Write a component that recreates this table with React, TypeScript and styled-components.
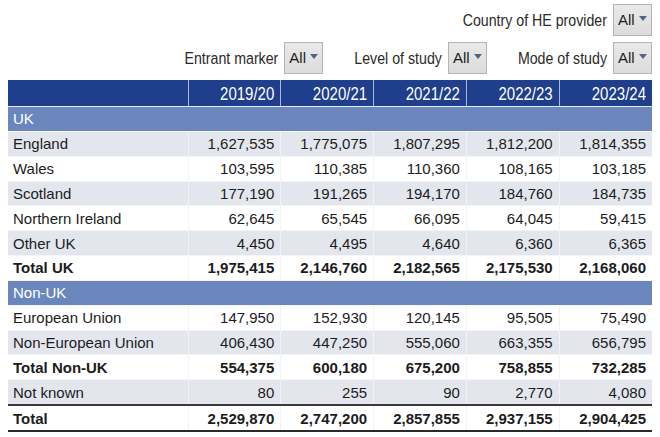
import React from "react";
import styled, { createGlobalStyle } from "styled-components";

const GlobalStyle = createGlobalStyle`
  html, body { margin: 0; padding: 0; background: #ffffff; }
  body { font-family: "Liberation Sans", Arial, sans-serif; color: #1c1c1c; }
`;

const Page = styled.div`
  width: 660px;
  padding: 4px 8px 0 8px;
  box-sizing: border-box;
  display: flex;
  flex-direction: column;
  gap: 6px;
`;

const FilterBar = styled.div`
  display: flex;
  justify-content: flex-end;
  align-items: center;
  gap: 31px;
  height: 32px;
`;

const FilterGroup = styled.div`
  display: flex;
  align-items: center;
  gap: 6px;
`;

const FilterLabel = styled.span`
  display: inline-block;
  font-size: 14.2px;
  color: #2a2a2a;
  transform: scaleY(1.2);
`;

const SelectBox = styled.div`
  position: relative;
  width: 39px;
  height: 32px;
  box-sizing: border-box;
  border: 1px solid #b4b4b4;
  background: linear-gradient(#e9e9e9, #dcdcdc);
  font-size: 15px;
  padding: 6px 0 0 4px;
  color: #1c1c1c;
`;

const Caret = styled.span`
  position: absolute;
  right: 4px;
  top: 11px;
  width: 0;
  height: 0;
  border-left: 4px solid transparent;
  border-right: 4px solid transparent;
  border-top: 5px solid #55647f;
`;

const Table = styled.table`
  width: 644px;
  table-layout: fixed;
  border-collapse: collapse;
  font-size: 15px;
`;

const HeadCell = styled.th`
  background: #1f3e8c;
  color: #ffffff;
  height: 26px;
  padding: 0 6px 0 0;
  text-align: right;
  font-weight: normal;
  font-size: 15px;
  border-left: 1px solid #a9b8d8;
  border-bottom: 1px solid #e6ebf5;
  &:first-child { border-left: none; }
`;

const Year = styled.span`
  display: inline-block;
  transform: scaleY(1.2);
`;

type Kind = "section" | "odd" | "even";

const Row = styled.tr<{ $kind: Kind; $strong?: boolean; $grand?: boolean }>`
  background: ${(p) =>
    p.$kind === "section" ? "#6a86bd" : p.$kind === "odd" ? "#e4e6ed" : "#ffffff"};
  color: ${(p) => (p.$kind === "section" ? "#ffffff" : "#1c1c1c")};
  font-weight: ${(p) => (p.$strong ? "bold" : "normal")};
  ${(p) =>
    p.$grand
      ? `border-top: 2px solid #3a3a3a; border-bottom: 2px solid #2a2a2a;`
      : ``}
`;

const Cell = styled.td<{ $num?: boolean }>`
  height: 23.85px;
  padding: 0 ${(p) => (p.$num ? "6px" : "0")} 0 ${(p) => (p.$num ? "0" : "5px")};
  text-align: ${(p) => (p.$num ? "right" : "left")};
  border-left: 1px solid #f2f3f6;
  border-top: 1px solid #f4f5f8;
  white-space: nowrap;
  &:first-child { border-left: none; }
`;

const years = ["2019/20", "2020/21", "2021/22", "2022/23", "2023/24"];

type RowData =
  | { section: string }
  | { label: string; values: string[]; strong?: boolean; grand?: boolean; shade: boolean };

const rows: RowData[] = [
  { section: "UK" },
  { label: "England", values: ["1,627,535", "1,775,075", "1,807,295", "1,812,200", "1,814,355"], shade: true },
  { label: "Wales", values: ["103,595", "110,385", "110,360", "108,165", "103,185"], shade: false },
  { label: "Scotland", values: ["177,190", "191,265", "194,170", "184,760", "184,735"], shade: true },
  { label: "Northern Ireland", values: ["62,645", "65,545", "66,095", "64,045", "59,415"], shade: false },
  { label: "Other UK", values: ["4,450", "4,495", "4,640", "6,360", "6,365"], shade: true },
  { label: "Total UK", values: ["1,975,415", "2,146,760", "2,182,565", "2,175,530", "2,168,060"], strong: true, shade: false },
  { section: "Non-UK" },
  { label: "European Union", values: ["147,950", "152,930", "120,145", "95,505", "75,490"], shade: false },
  { label: "Non-European Union", values: ["406,430", "447,250", "555,060", "663,355", "656,795"], shade: true },
  { label: "Total Non-UK", values: ["554,375", "600,180", "675,200", "758,855", "732,285"], strong: true, shade: false },
  { label: "Not known", values: ["80", "255", "90", "2,770", "4,080"], shade: true },
  { label: "Total", values: ["2,529,870", "2,747,200", "2,857,855", "2,937,155", "2,904,425"], strong: true, grand: true, shade: false },
];

const Filter: React.FC<{ label: string }> = ({ label }) => (
  <FilterGroup>
    <FilterLabel>{label}</FilterLabel>
    <SelectBox>
      All
      <Caret />
    </SelectBox>
  </FilterGroup>
);

export default function App() {
  return (
    <>
      <GlobalStyle />
      <Page>
        <FilterBar>
          <Filter label="Country of HE provider" />
        </FilterBar>
        <FilterBar>
          <Filter label="Entrant marker" />
          <Filter label="Level of study" />
          <Filter label="Mode of study" />
        </FilterBar>
        <Table>
          <colgroup>
            <col style={{ width: 180 }} />
            <col />
            <col />
            <col />
            <col />
            <col />
          </colgroup>
          <thead>
            <tr>
              <HeadCell />
              {years.map((y) => (
                <HeadCell key={y}>
                  <Year>{y}</Year>
                </HeadCell>
              ))}
            </tr>
          </thead>
          <tbody>
            {rows.map((r, i) =>
              "section" in r ? (
                <Row key={i} $kind="section">
                  <Cell colSpan={6}>{r.section}</Cell>
                </Row>
              ) : (
                <Row key={i} $kind={r.shade ? "odd" : "even"} $strong={r.strong} $grand={r.grand}>
                  <Cell>{r.label}</Cell>
                  {r.values.map((v, j) => (
                    <Cell key={j} $num>
                      {v}
                    </Cell>
                  ))}
                </Row>
              )
            )}
          </tbody>
        </Table>
      </Page>
    </>
  );
}
